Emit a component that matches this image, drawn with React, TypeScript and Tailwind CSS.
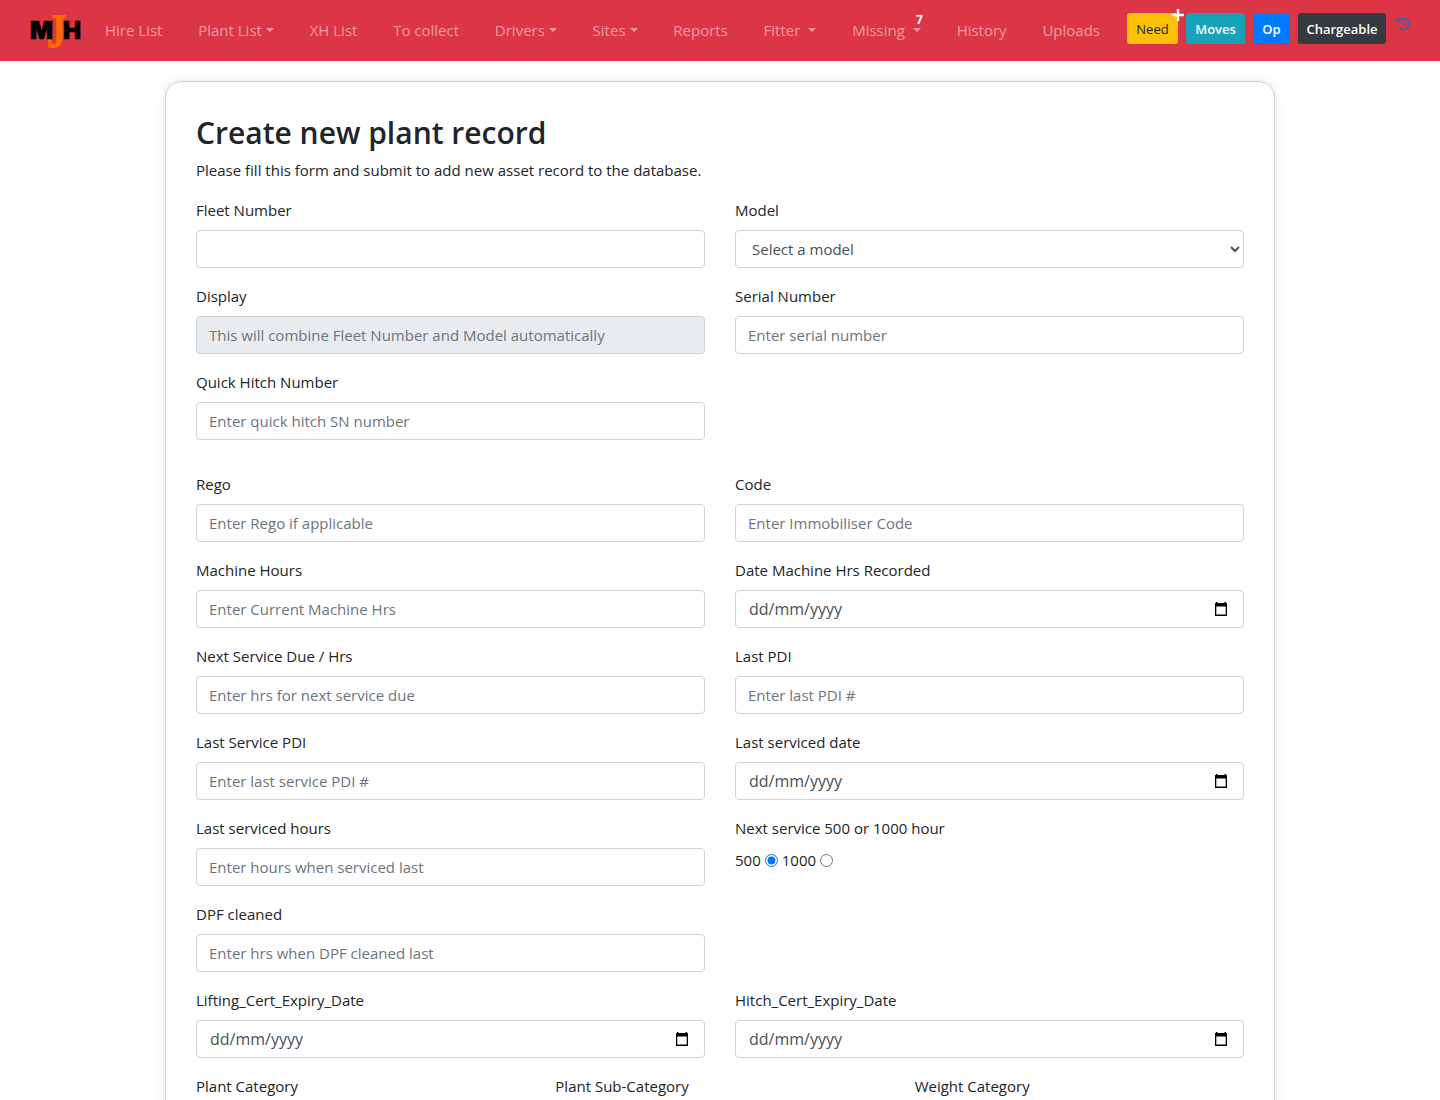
import React from "react";

const navLink = "flex items-center whitespace-nowrap text-white/50 hover:text-white/75";
const control =
  "block h-[38px] w-full rounded border border-[#ced4da] bg-white px-3 text-[15px] leading-6 text-[#495057] placeholder:text-[#6c757d] placeholder:opacity-100 focus:border-[#80bdff] focus:outline-none";
const labelClass = "mb-2 block leading-6";
const smallButton = "h-[31px] rounded-[3px] text-[13px] leading-5";

function Caret({ wide = false }: { wide?: boolean }) {
  return (
    <span
      aria-hidden="true"
      className={`${wide ? "ml-2" : "ml-1"} border-x-4 border-t-4 border-x-transparent border-t-current`}
    />
  );
}

function NavItem({ text, menu = false, wide = false, badge }: { text: string; menu?: boolean; wide?: boolean; badge?: string }) {
  return (
    <li className="relative">
      <a href="#" className={navLink}>
        {text}
        {menu && <Caret wide={wide} />}
      </a>
      {badge && (
        <span className="absolute -top-1.5 -right-0.5 text-xs leading-4 font-bold text-white">{badge}</span>
      )}
    </li>
  );
}

function Logo() {
  return (
    <svg width="52" height="36" viewBox="0 0 52 36" className="overflow-visible" role="img" aria-label="MJH">
      <g fontFamily="Inter, sans-serif" fontWeight="900" fontSize="24" fill="#000" stroke="#000" strokeWidth="0.6">
        <text x="0" y="27">M</text>
        <text x="33" y="27">H</text>
      </g>
      <text x="18" y="35" fill="#ff6a00" stroke="#ff6a00" strokeWidth="2" fontFamily="Liberation Serif, serif" fontSize="46">
        J
      </text>
    </svg>
  );
}

function HistoryIcon() {
  return (
    <svg width="14" height="14" viewBox="0 0 14 14" fill="none" stroke="#3b64a8" aria-hidden="true">
      <path d="M2 4.2A5.7 5.7 0 1 1 3.2 11.2" strokeWidth="1.7" />
      <path d="M0.2 1.2V5.6H4.8z" fill="#3b64a8" stroke="none" />
      <path d="M7.2 3.6v3.6l2 1.7" strokeWidth="1.5" />
    </svg>
  );
}

function Field({ id, label, placeholder, disabled }: { id: string; label: string; placeholder?: string; disabled?: boolean }) {
  return (
    <div>
      <label htmlFor={id} className={labelClass}>{label}</label>
      <input
        id={id}
        type="text"
        placeholder={placeholder}
        disabled={disabled}
        className={`${control} disabled:bg-[#e9ecef]`}
      />
    </div>
  );
}

function DateField({ id, label }: { id: string; label: string }) {
  return (
    <div>
      <label htmlFor={id} className={labelClass}>{label}</label>
      <div className="flex h-[38px] items-center rounded border border-[#ced4da] bg-white pr-[15px] pl-[13px] focus-within:border-[#80bdff]">
        <input
          id={id}
          type="text"
          inputMode="numeric"
          placeholder="dd/mm/yyyy"
          className="min-w-0 flex-1 bg-transparent text-base leading-6 text-[#495057] placeholder:text-[#495057] placeholder:opacity-100 focus:outline-none"
        />
        <button type="button" aria-label={`Choose ${label}`}>
          <svg width="14" height="14" viewBox="0 0 14 14" className="block" aria-hidden="true">
            <path fillRule="evenodd" d="M1 1h1V0h1.5v1h7V0H12v1h1v13H1zM2.3 4.5v8.1h9.4V4.5z" fill="#000" />
          </svg>
        </button>
      </div>
    </div>
  );
}

function SelectField({ id, label, option }: { id: string; label: string; option?: string }) {
  return (
    <div>
      <label htmlFor={id} className={labelClass}>{label}</label>
      <select id={id} className={control}>{option && <option>{option}</option>}</select>
    </div>
  );
}

const row = "grid grid-cols-2 gap-x-[30px]";

export default function App() {
  return (
    <div className="min-h-screen bg-white font-['Open_Sans',sans-serif] text-[15px] leading-6 text-[#212529]">
      <nav className="flex h-[61px] items-center bg-[#dc3545] px-[30px] pb-0.5">
        <a href="#" className="mr-[23px] shrink-0"><Logo /></a>
        <ul className="flex flex-1 items-center justify-between">
          <NavItem text="Hire List" />
          <NavItem text="Plant List" menu />
          <NavItem text="XH List" />
          <NavItem text="To collect" />
          <NavItem text="Drivers" menu />
          <NavItem text="Sites" menu />
          <NavItem text="Reports" />
          <NavItem text="Fitter" menu wide />
          <NavItem text="Missing" menu wide badge="7" />
          <NavItem text="History" />
          <NavItem text="Uploads" />
        </ul>
        <div className="mb-0.5 ml-[27px] flex shrink-0 gap-2">
          <button type="button" className={`${smallButton} relative w-[51px] bg-[#ffc107] font-medium text-[#212529]`}>
            Need
            <svg className="absolute -top-1 -right-1.5" width="12" height="12" viewBox="0 0 12 12" aria-hidden="true">
              <path d="M6 0v12M0 6h12" stroke="#fff" strokeWidth="2.4" />
            </svg>
          </button>
          <button type="button" className={`${smallButton} w-[59px] bg-[#17a2b8] font-semibold text-white`}>Moves</button>
          <button type="button" className={`${smallButton} w-[37px] bg-[#007bff] font-semibold text-white`}>Op</button>
          <button type="button" className={`${smallButton} w-[88px] bg-[#343a40] font-semibold text-white`}>Chargeable</button>
          <a href="#" aria-label="Recent activity" className="mt-1 ml-0.5"><HistoryIcon /></a>
        </div>
      </nav>

      <main className="mx-auto mt-5 max-w-[1110px] rounded-2xl border border-[#ccc] p-[30px] shadow-[0_0_10px_rgba(0,0,0,0.1)]">
        <h2 className="mb-1 text-[30px] leading-[42px] font-semibold">Create new plant record</h2>
        <p className="mb-4">Please fill this form and submit to add new asset record to the database.</p>
        <form className="flex flex-col gap-4">
          <div className={row}>
            <Field id="fleet" label="Fleet Number" />
            <SelectField id="model" label="Model" option="Select a model" />
          </div>
          <div className={row}>
            <Field id="display" label="Display" placeholder="This will combine Fleet Number and Model automatically" disabled />
            <Field id="serial" label="Serial Number" placeholder="Enter serial number" />
          </div>
          <div className={`${row} mb-4`}>
            <Field id="hitch" label="Quick Hitch Number" placeholder="Enter quick hitch SN number" />
          </div>
          <div className={row}>
            <Field id="rego" label="Rego" placeholder="Enter Rego if applicable" />
            <Field id="code" label="Code" placeholder="Enter Immobiliser Code" />
          </div>
          <div className={row}>
            <Field id="hours" label="Machine Hours" placeholder="Enter Current Machine Hrs" />
            <DateField id="hours-date" label="Date Machine Hrs Recorded" />
          </div>
          <div className={row}>
            <Field id="next-service" label="Next Service Due / Hrs" placeholder="Enter hrs for next service due" />
            <Field id="last-pdi" label="Last PDI" placeholder="Enter last PDI #" />
          </div>
          <div className={row}>
            <Field id="service-pdi" label="Last Service PDI" placeholder="Enter last service PDI #" />
            <DateField id="serviced-date" label="Last serviced date" />
          </div>
          <div className={row}>
            <Field id="serviced-hours" label="Last serviced hours" placeholder="Enter hours when serviced last" />
            <fieldset>
              <legend className={labelClass}>Next service 500 or 1000 hour</legend>
              <div className="flex items-center gap-1">
                <label htmlFor="service-500">500</label>
                <input id="service-500" type="radio" name="service" defaultChecked className="size-[13px]" />
                <label htmlFor="service-1000">1000</label>
                <input id="service-1000" type="radio" name="service" className="size-[13px]" />
              </div>
            </fieldset>
          </div>
          <div className={row}>
            <Field id="dpf" label="DPF cleaned" placeholder="Enter hrs when DPF cleaned last" />
          </div>
          <div className={row}>
            <DateField id="lifting" label="Lifting_Cert_Expiry_Date" />
            <DateField id="hitch-cert" label="Hitch_Cert_Expiry_Date" />
          </div>
          <div className="grid grid-cols-3 gap-x-[30px]">
            <SelectField id="category" label="Plant Category" />
            <SelectField id="sub-category" label="Plant Sub-Category" />
            <SelectField id="weight" label="Weight Category" />
          </div>
        </form>
      </main>
    </div>
  );
}
